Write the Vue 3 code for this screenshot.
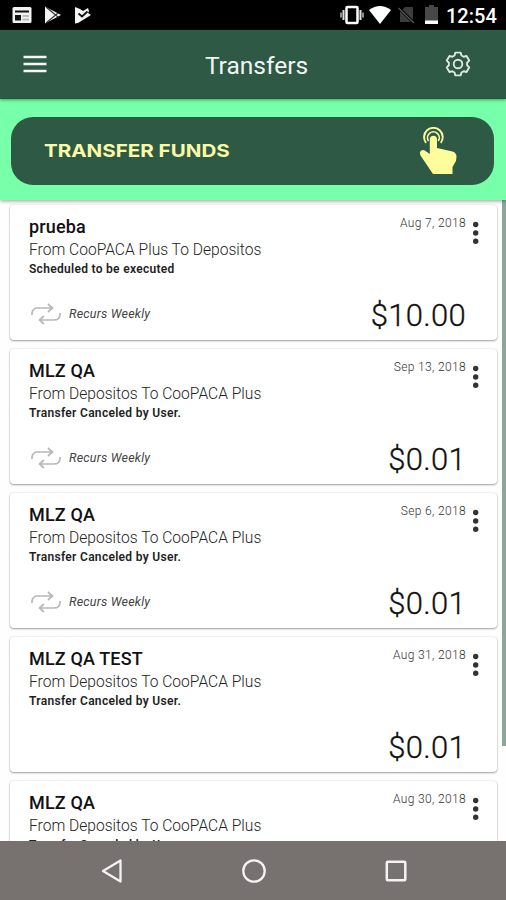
<script setup>
const transfers = [
  { name: 'prueba', route: 'From CooPACA Plus To Depositos', status: 'Scheduled to be executed', date: 'Aug 7, 2018', amount: '$10.00', recurs: 'Recurs Weekly' },
  { name: 'MLZ QA', route: 'From Depositos To CooPACA Plus', status: 'Transfer Canceled by User.', date: 'Sep 13, 2018', amount: '$0.01', recurs: 'Recurs Weekly' },
  { name: 'MLZ QA', route: 'From Depositos To CooPACA Plus', status: 'Transfer Canceled by User.', date: 'Sep 6, 2018', amount: '$0.01', recurs: 'Recurs Weekly' },
  { name: 'MLZ QA TEST', route: 'From Depositos To CooPACA Plus', status: 'Transfer Canceled by User.', date: 'Aug 31, 2018', amount: '$0.01', recurs: '' },
  { name: 'MLZ QA', route: 'From Depositos To CooPACA Plus', status: 'Transfer Canceled by User.', date: 'Aug 30, 2018', amount: '$0.01', recurs: '' },
]

// Outline of a six-toothed gear centred on 14,14
const gearPoints = Array.from({ length: 6 }, (_, k) =>
  [[-22, 9.2], [-13, 11.7], [13, 11.7], [22, 9.2]].map(([offset, radius]) => {
    const a = ((k * 60 - 90 + offset) * Math.PI) / 180
    return `${(14 + radius * Math.cos(a)).toFixed(2)},${(14 + radius * Math.sin(a)).toFixed(2)}`
  }).join(' '),
).join(' ')
</script>

<template>
  <div class="screen">
    <div class="status-bar">
      <div class="notifications">
        <svg width="20" height="18" viewBox="0 0 20 18">
          <rect x="0.5" y="1" width="19" height="16" rx="1.5" fill="#f2f2f2" />
          <path d="M3 5.5h14" stroke="#111" stroke-width="2" />
          <rect x="3" y="9" width="6" height="5.5" fill="#111" />
          <path d="M10.5 10h6.5M10.5 13.5h6.5" stroke="#bbb" stroke-width="2" />
        </svg>
        <svg width="18" height="18" viewBox="0 0 18 18">
          <path d="M1 0.5L17 9 1 17.5z" fill="#f4f4f4" />
          <path d="M2 1l12 10M2 17L14 7" stroke="#333" stroke-width="1.1" />
        </svg>
        <svg width="18" height="18" viewBox="0 0 18 18">
          <path d="M1 1l5 2 3 2 5-3 1 3-1 2 3 2L4 17 1 17.5z" fill="#f4f4f4" />
          <path d="M4.500 7.500l3.500 3 5.500-5" fill="none" stroke="#111" stroke-width="1.800" />
        </svg>
      </div>
      <div class="system">
        <svg width="24" height="20" viewBox="0 0 24 20">
          <rect x="6.5" y="2" width="11" height="16" rx="1" fill="none" stroke="#fff" stroke-width="2.5" />
          <path d="M3.5 5v10M20.5 5v10" stroke="#ddd" stroke-width="2" />
          <path d="M1 7.5v5M23 7.5v5" stroke="#bbb" stroke-width="1.5" />
        </svg>
        <svg class="wifi" width="22" height="18" viewBox="0 0 22 18">
          <path d="M0 4Q11-4 22 4L11 18z" fill="#fff" />
        </svg>
        <svg class="sim" width="18" height="18" viewBox="0 0 18 18">
          <path d="M7 1h8v15H2V6z" fill="#3c3c3c" />
          <path d="M1 2l15 15" stroke="#000" stroke-width="3" />
          <path d="M0.5 2l15.500 15" stroke="#555" stroke-width="1.300" />
        </svg>
        <svg class="battery" width="13" height="20" viewBox="0 0 13 20">
          <path d="M4 0h5v2h4v17H0V2h4z" fill="#484848" />
          <path d="M0 15.5h13V19H0z" fill="#fff" />
        </svg>
        <span class="clock">12:54</span>
      </div>
    </div>

    <header class="app-bar">
      <svg class="menu-icon" width="24" height="20" viewBox="0 0 24 20">
        <path d="M0.5 3h23M0.5 10h23M0.5 17h23" stroke="#f4f6f5" stroke-width="2.6" />
      </svg>
      <h1>Transfers</h1>
      <svg class="gear-icon" width="28" height="28" viewBox="0 0 28 28" fill="none" stroke="#dde8df" stroke-width="1.900" stroke-linejoin="round">
        <polygon :points="gearPoints" />
        <circle cx="14" cy="14" r="4.300" />
      </svg>
    </header>

    <section class="action-band">
      <button class="funds-button">
        <span>TRANSFER FUNDS</span>
        <svg width="38" height="48" viewBox="0 0 38 48">
          <path d="M7 15.800A9.300 9.300 0 1 1 21.800 15.800" fill="none" stroke="#fdfd9b" stroke-width="1.900" />
          <path d="M9.500 14A5.900 5.900 0 1 1 19.300 14" fill="none" stroke="#fdfd9b" stroke-width="1.700" />
          <path d="M10.800 12.300a3.600 3.600 0 0 1 7.200 0V21l15.500 3.500q4 1.300 4 5l-.5 4.500-3.500 6v7H14L1.500 28.500Q0 25 2.300 23.500q2.200-1 4.200.5l4.300 3z" fill="#fdfd9b" />
        </svg>
      </button>
    </section>

    <main class="list">
      <article v-for="(t, i) in transfers" :key="i" class="card">
        <div class="details">
          <h2>{{ t.name }}</h2>
          <p class="route">{{ t.route }}</p>
          <p class="state">{{ t.status }}</p>
          <div v-if="t.recurs" class="recurs">
            <svg width="30" height="22" viewBox="0 0 30 22" fill="none" stroke="#b8b8b8" stroke-width="1.700">
              <path d="M1 12V10Q1.500 5 7 5H21M17 1l4.500 4L17 9M29 10v2q-.5 5-6 5H9M13 13l-4.500 4 4.500 4" />
            </svg>
            <span>{{ t.recurs }}</span>
          </div>
        </div>
        <div class="figures">
          <time>{{ t.date }}</time>
          <strong>{{ t.amount }}</strong>
        </div>
        <svg class="more" width="8" height="24" viewBox="0 0 8 24" fill="#333">
          <circle cx="3.7" cy="3.5" r="2.7" /><circle cx="3.7" cy="12" r="2.7" /><circle cx="3.7" cy="20.300" r="2.7" />
        </svg>
      </article>
      <div class="scrollbar"></div>
    </main>

    <nav class="nav-bar">
      <svg width="24" height="26" viewBox="0 0 24 26"><path d="M20.500 2.500v21L3 13z" fill="none" stroke="#f4f2f2" stroke-width="2.300" stroke-linejoin="round" /></svg>
      <svg width="26" height="26" viewBox="0 0 26 26"><circle cx="13" cy="13" r="10.700" fill="none" stroke="#f4f2f2" stroke-width="2.300" /></svg>
      <svg width="24" height="26" viewBox="0 0 24 26"><rect x="2.800" y="3.800" width="18.500" height="18.500" rx="1" fill="none" stroke="#f4f2f2" stroke-width="2.500" /></svg>
    </nav>
  </div>
</template>

<style>
body { margin: 0; background: #fff; }
</style>

<style scoped>
* { box-sizing: border-box; margin: 0; }
svg { display: block; flex: none; }
.screen {
  width: 506px;
  height: 900px;
  display: flex;
  flex-direction: column;
  overflow: hidden;
  background: #fefefe;
  font-family: Roboto, sans-serif;
}
.status-bar {
  flex: none;
  height: 30px;
  padding: 0 9px 0 12px;
  display: flex;
  justify-content: space-between;
  align-items: center;
  background: #000;
}
.notifications { display: flex; gap: 12px; }
.system { display: flex; align-items: center; }
.wifi { margin-left: 5px; }
.sim { margin-left: 7px; }
.battery { margin-left: 9px; }
.clock {
  width: 51px;
  margin-left: 8px;
  padding-top: 1px;
  color: #fff;
  font-size: 20px;
  font-weight: 500;
  line-height: 24px;
  white-space: nowrap;
}
.app-bar {
  flex: none;
  position: relative;
  z-index: 2;
  height: 69px;
  padding: 0 34px 0 23px;
  display: flex;
  align-items: center;
  justify-content: space-between;
  background: #2d5945;
  border-bottom: 1px solid #295440;
  box-shadow: 0 1px 3px rgba(0, 70, 35, .5);
}
h1 {
  padding: 3px 0 0 22px;
  color: #f2f6f3;
  font-size: 24.5px;
  font-weight: 400;
  line-height: 30px;
}
.action-band {
  flex: none;
  position: relative;
  z-index: 1;
  height: 101px;
  padding: 18px 12px 15px 11px;
  background: #78ffaa;
  box-shadow: 0 1px 4px rgba(0, 0, 0, .4);
}
.funds-button {
  width: 100%;
  height: 68px;
  padding: 0 37px 0 33px;
  display: flex;
  align-items: center;
  justify-content: space-between;
  border: 0;
  border-radius: 22px;
  background: #2d5945;
  color: #fbf9a5;
  font: 700 18px/24px Inter, sans-serif;
}
.funds-button span {
  transform: scaleX(1.142);
  transform-origin: left center;
}
.list {
  position: relative;
  flex: 1;
  min-height: 0;
  overflow: hidden;
  padding: 5px 9px 0 10px;
  display: flex;
  flex-direction: column;
  gap: 9px;
}
.card {
  flex: none;
  height: 135px;
  padding: 0 17px 0 19px;
  display: flex;
  background: #fff;
  border-radius: 4px;
  box-shadow: 0 1px 2px rgba(0, 0, 0, .36), 0 0 2px rgba(0, 0, 0, .12);
}
.details { flex: 1; white-space: nowrap; }
h2 {
  padding-top: 11px;
  color: #111;
  font-size: 18px;
  font-weight: 500;
  line-height: 22px;
  letter-spacing: .15px;
}
.route {
  margin-top: 1px;
  color: #222;
  font-size: 15.6px;
  font-weight: 300;
  line-height: 23px;
}
.state {
  color: #222;
  font-size: 12px;
  font-weight: 600;
  line-height: 15px;
  letter-spacing: .3px;
}
.recurs {
  margin-top: 26px;
  padding-left: 2px;
  display: flex;
  align-items: center;
  gap: 8px;
  color: #444;
  font-size: 12.5px;
  font-style: italic;
  line-height: 22px;
  letter-spacing: .2px;
}
.figures {
  padding: 10px 4px 6px 0;
  display: flex;
  flex-direction: column;
  justify-content: space-between;
  align-items: flex-end;
}
time { color: #333; font-size: 12px; line-height: 17px; font-weight: 300; letter-spacing: .35px; }
strong { color: #111; font-size: 31px; font-weight: 300; line-height: 36px; letter-spacing: .3px; -webkit-text-stroke: .3px #111; }
.more { margin-top: 16px; margin-left: 2px; }
.scrollbar {
  position: absolute;
  top: 0;
  right: 0;
  width: 4px;
  height: 546px;
  background: #8ba79b;
}
.nav-bar {
  flex: none;
  height: 59px;
  padding: 1px 98px 0 100px;
  display: flex;
  align-items: center;
  justify-content: space-between;
  background: #777170;
}
</style>
